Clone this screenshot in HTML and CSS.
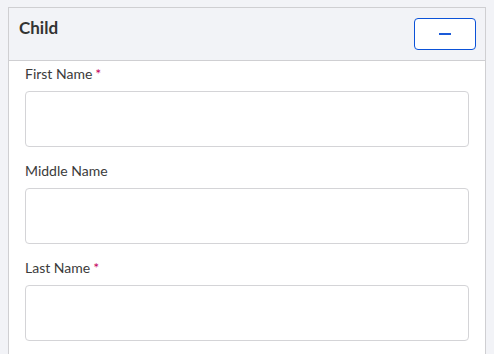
FILE: index.html
```html
<!DOCTYPE html>
<html>
<head>
<meta charset="utf-8">
<link rel="stylesheet" href="styles.css">
</head>
<body>
<section class="panel">
  <header class="panel-head">
    <h2 class="panel-title">Child</h2>
    <button class="collapse-btn" type="button" aria-label="Collapse"><span class="minus"></span></button>
  </header>
  <div class="panel-body">
    <div class="field">
      <label class="field-label">First Name<span class="req">*</span></label>
      <input class="field-input" type="text">
    </div>
    <div class="field">
      <label class="field-label">Middle Name</label>
      <input class="field-input" type="text">
    </div>
    <div class="field">
      <label class="field-label">Last Name<span class="req">*</span></label>
      <input class="field-input" type="text">
    </div>
  </div>
</section>
</body>
</html>
```
FILE: styles.css
```css
html, body {
  background: #f2f3f7;
}
body {
  margin: 7px 8px 0 8px;
  font-family: Lato, "Open Sans", sans-serif;
  color: #3b3b3b;
}
.panel {
  border: 1px solid #cfcfd2;
  background: #fff;
}
.panel-head {
  display: flex;
  justify-content: space-between;
  align-items: flex-start;
  padding: 10px 9px 10px 10px;
  background: #f2f3f7;
  border-bottom: 1px solid #cfcfd2;
}
.panel-title {
  margin: 0;
  font-size: 17px;
  line-height: 20px;
  font-weight: 700;
  color: #333;
}
.collapse-btn {
  width: 62px;
  height: 32px;
  padding: 0;
  border: 1px solid #0b52d8;
  border-radius: 4px;
  background: #fff;
  display: flex;
  align-items: center;
  justify-content: center;
}
.minus {
  display: block;
  width: 12px;
  height: 2px;
  background: #1a5ad8;
}
.panel-body {
  padding: 3px 16px 0 16px;
}
.field {
  margin-bottom: 14px;
}
.field-label {
  display: block;
  font-size: 14px;
  line-height: 20px;
  margin-bottom: 7px;
  color: #3b3b3b;
}
.req {
  color: #c4005a;
  font-size: 14px;
  line-height: 0;
  margin-left: 3px;
}
.field-input {
  display: block;
  box-sizing: border-box;
  width: 100%;
  height: 56px;
  margin: 0;
  border: 1px solid #d4d4d7;
  border-radius: 4px;
  background: #fff;
}
```
